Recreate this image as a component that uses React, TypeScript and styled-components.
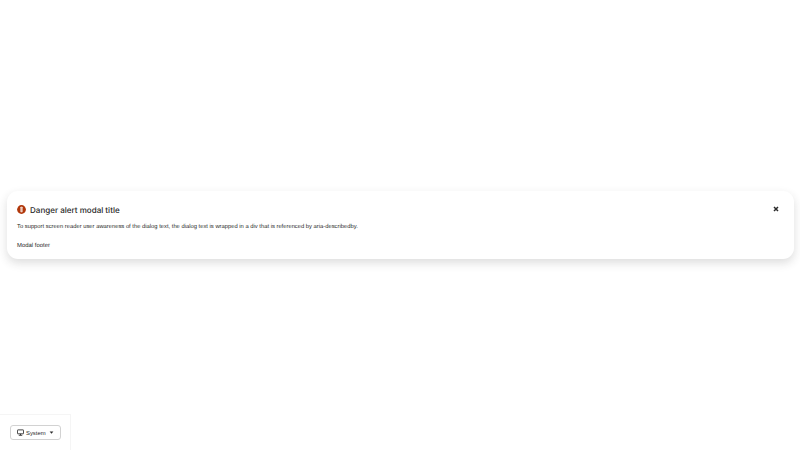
import styled, { createGlobalStyle } from "styled-components";

const Global = createGlobalStyle`
  html, body {
    margin: 0;
    padding: 0;
    background: #fff;
    font-family: "Liberation Sans", "Noto Sans", sans-serif;
    color: #2a2a2a;
    text-rendering: geometricPrecision;
  }
`;
const Page = styled.div`
  width: 800px;
  height: 450px;
  display: flex;
  align-items: center;
  justify-content: center;
  overflow: hidden;
  box-sizing: border-box;
  padding: 0 6.5px;
`;
const Modal = styled.div`
  position: relative;
  flex: 1;
  height: 68px;
  box-sizing: border-box;
  padding: 12px 10.5px;
  background: #fff;
  border-radius: 11px;
  box-shadow: 0 4px 10px rgba(41, 41, 41, 0.16);
`;
const TitleRow = styled.div`
  display: flex;
  align-items: center;
  gap: 4px;
  height: 13px;
`;
const Title = styled.h1`
  margin: 0;
  font-family: "Inter", "Noto Sans", sans-serif;
  font-size: 8.05px;
  font-weight: 500;
  line-height: 13px;
  position: relative;
  top: 0.5px;
`;
const Body = styled.div`
  margin-top: 6px;
  font-size: 5.82px;
  line-height: 10px;
`;
const Footer = styled.div`
  margin-top: 9px;
  font-size: 5.95px;
  line-height: 10px;
`;
const Close = styled.button`
  position: absolute;
  top: 13px;
  right: 13px;
  width: 10px;
  height: 10px;
  padding: 0;
  border: 0;
  background: none;
  display: flex;
  align-items: center;
  justify-content: center;
`;
const Switcher = styled.div`
  position: fixed;
  left: 0;
  bottom: 0;
  width: 71px;
  height: 36px;
  box-sizing: border-box;
  padding: 10px 10px 0;
  background: #fff;
  border-top: 1px solid #f5f5f5;
  border-right: 1px solid #f5f5f5;
`;
const Toggle = styled.button`
  width: 51px;
  height: 15px;
  box-sizing: border-box;
  padding: 0 6px 0 5.5px;
  display: flex;
  align-items: center;
  background: #fff;
  border: 1px solid #d2d2d2;
  border-radius: 3px;
  font-family: inherit;
  font-size: 5.9px;
  color: #2a2a2a;
`;
const Label = styled.span`
  margin-left: 2.5px;
  flex: 1;
  text-align: left;
`;

export default function App() {
  return (
    <>
      <Global />
      <Page>
        <Modal role="dialog" aria-describedby="modal-body">
          <TitleRow>
            <svg width="9" height="9" viewBox="0 0 10 10">
              <circle cx="5" cy="5" r="4.9" fill="#b1380b" />
              <rect x="3.9" y="2" width="2.2" height="6" rx="0.5" fill="#fff" />
              <rect x="4.5" y="2.4" width="1" height="5.2" fill="#e8c4b6" />
            </svg>
            <Title>Danger alert modal title</Title>
          </TitleRow>
          <Body id="modal-body">
            To support screen reader user awareness of the dialog text, the dialog text is wrapped in a div that is referenced by aria-describedby.
          </Body>
          <Footer>Modal footer</Footer>
          <Close aria-label="Close">
            <svg width="6" height="6" viewBox="0 0 6 6">
              <path d="M1 1L5 5M5 1L1 5" stroke="#2a2a2a" strokeWidth="1.5" />
            </svg>
          </Close>
        </Modal>
      </Page>
      <Switcher>
        <Toggle>
          <svg width="7" height="7" viewBox="0 0 8 8">
            <rect x="0.5" y="1" width="7" height="4.5" rx="0.5" fill="none" stroke="#2a2a2a" />
            <path d="M2 7.2H6M4 5.5V7" stroke="#2a2a2a" />
          </svg>
          <Label>System</Label>
          <svg width="5" height="3" viewBox="0 0 6 4">
            <path d="M0.5 0.5H5.5L3 3.5Z" fill="#2a2a2a" />
          </svg>
        </Toggle>
      </Switcher>
    </>
  );
}
